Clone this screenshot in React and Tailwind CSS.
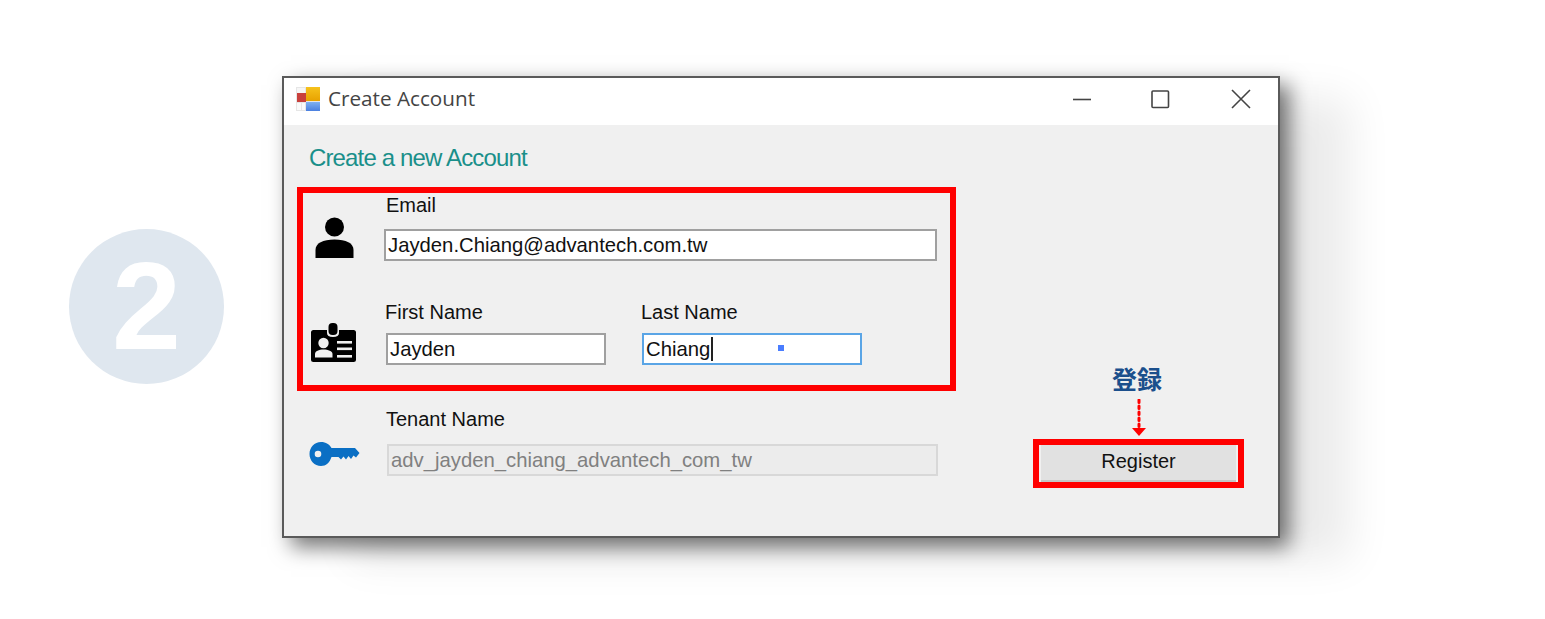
import React from 'react';

const WindowLogo = () => (
  <svg width="24" height="24" viewBox="0 0 24 24" className="shrink-0">
    <defs>
      <linearGradient id="logoYellow" x1="0" y1="0" x2="0" y2="1">
        <stop offset="0" stopColor="#f6c21c" />
        <stop offset="1" stopColor="#e8a200" />
      </linearGradient>
      <linearGradient id="logoBlue" x1="0" y1="0" x2="0" y2="1">
        <stop offset="0" stopColor="#7fb0f0" />
        <stop offset="1" stopColor="#4b80e0" />
      </linearGradient>
    </defs>
    <rect x="0" y="0" width="24" height="24" fill="#e6e6e6" />
    <rect x="1" y="1" width="8" height="5" fill="#f6f6f6" />
    <rect x="1" y="6" width="9" height="9" fill="#c9403c" />
    <rect x="10" y="0" width="14" height="14" fill="url(#logoYellow)" />
    <rect x="10" y="15" width="14" height="9" fill="url(#logoBlue)" />
    <rect x="1" y="16" width="4" height="7" fill="#fafafa" />
    <rect x="6" y="16" width="3" height="7" fill="#fafafa" />
  </svg>
);

const UserIcon = ({ className }) => (
  <svg width="39" height="41" viewBox="0 0 39 41" className={className}>
    <circle cx="19.5" cy="10" r="9.5" fill="#000" />
    <path d="M0.5 41 V33 C0.5 26 8 22.5 19.5 22.5 C31 22.5 38.5 26 38.5 33 V41 Z" fill="#000" />
  </svg>
);

const BadgeIcon = ({ className }) => (
  <svg width="46" height="39" viewBox="0 0 46 39" className={className}>
    <rect x="18.5" y="0" width="9" height="12" rx="4" fill="#000" />
    <path d="M1 9.5 A2.5 2.5 0 0 1 3.5 7 H17 V10 C17 12.5 19 14 23 14 C27 14 29 12.5 29 10 V7 H43.5 A2.5 2.5 0 0 1 46 9.5 V36.5 A2.5 2.5 0 0 1 43.5 39 H3.5 A2.5 2.5 0 0 1 1 36.5 Z" fill="#000" />
    <circle cx="13.5" cy="20" r="5.2" fill="#f0f0f0" />
    <path d="M5 34.5 V31 C5 28 9 26.5 13.5 26.5 C18 26.5 22.5 28 22.5 31 V34.5 Z" fill="#f0f0f0" />
    <rect x="27" y="18" width="15" height="2.6" fill="#f0f0f0" />
    <rect x="27" y="24.5" width="15" height="2.6" fill="#f0f0f0" />
    <rect x="27" y="32" width="15" height="2.6" fill="#f0f0f0" />
  </svg>
);

const KeyIcon = ({ className }) => (
  <svg width="51" height="26" viewBox="0 0 51 26" className={className}>
    <path
      fillRule="evenodd"
      d="M12 1 C17 1 20.5 3.5 22.5 7 H46 L50.5 12 L47 16.5 L44.5 14.5 L42 18 L39.5 15 L37 18.5 L34.5 15.5 L32 18.5 L29.5 16 H22.5 C20.5 22 17 25 12 25 C5.5 25 0.5 19.5 0.5 13 C0.5 6.5 5.5 1 12 1 Z M9 9.7 A3.3 3.3 0 1 0 9 16.3 A3.3 3.3 0 1 0 9 9.7 Z"
      fill="#0a6fc4"
    />
  </svg>
);

const Label = ({ className = '', children }) => (
  <div className={`h-5 text-[20px] leading-5 text-[#111] ${className}`}>{children}</div>
);

const Field = ({ className = '', children }) => (
  <div className={`flex h-8 items-center overflow-hidden border-2 pl-[2px] text-[20.3px] ${className}`}>
    {children}
  </div>
);

export default function App() {
  return (
    <div className="flex h-[619px] w-full items-start overflow-hidden bg-white pl-[69px] font-['Liberation_Sans','Noto_Sans_CJK_JP',sans-serif]">
      {/* step number */}
      <div className="mt-[229px] flex h-[155px] w-[155px] shrink-0 items-center justify-center rounded-full bg-[#dfe7ef] pb-[2px] text-[124px] leading-none font-bold text-white">
        2
      </div>

      {/* dialog */}
      <div className="mt-[76px] ml-[58px] flex h-[462px] w-[998px] shrink-0 flex-col border-2 border-[#5a5a5a] bg-[#f0f0f0] shadow-[9px_9px_20px_rgba(0,0,0,0.55),70px_22px_40px_rgba(0,0,0,0.08)]">
        <div className="flex h-[47px] shrink-0 items-center bg-white pb-[6px] pl-[12px]">
          <WindowLogo />
          <span className="ml-[8px] text-[20.7px] text-[#444] font-['Open_Sans',sans-serif]">Create Account</span>
          <div className="ml-auto flex items-center pr-[27px]">
            <svg width="20" height="20" viewBox="0 0 20 20" className="mr-[58px]">
              <path d="M1 10.5 H19" stroke="#444" strokeWidth="1.6" />
            </svg>
            <svg width="20" height="20" viewBox="0 0 20 20" className="mr-[61px]">
              <rect x="2" y="2" width="16.5" height="16.5" rx="1" fill="none" stroke="#444" strokeWidth="1.6" />
            </svg>
            <svg width="20" height="20" viewBox="0 0 20 20">
              <path d="M1 1 L19 19 M19 1 L1 19" stroke="#444" strokeWidth="1.6" />
            </svg>
          </div>
        </div>

        <div className="flex flex-1 pl-[13px]">
          <div className="w-[659px] shrink-0">
            <h1 className="mt-[19px] mb-[15px] ml-[12px] h-7 text-[24px] leading-7 font-normal tracking-[-0.85px] text-[#1a8f8a]">
              Create a new Account
            </h1>

            {/* required fields */}
            <div className="h-[204px] border-[6px] border-[#ff0000] pt-[2px]">
              <div className="flex">
                <UserIcon className="mt-[22px] ml-[12px] shrink-0" />
                <div className="ml-[30px] flex-1">
                  <Label className="ml-[2px]">Email</Label>
                  <Field className="mt-[14px] w-[553px] border-[#a0a0a0] bg-white text-[#111]">
                    Jayden.Chiang@advantech.com.tw
                  </Field>
                </div>
              </div>
              <div className="mt-[41px] flex">
                <BadgeIcon className="mt-[21px] ml-[7px] shrink-0" />
                <div className="ml-[29px] w-[256px]">
                  <Label>First Name</Label>
                  <Field className="mt-[11px] ml-[1px] w-[220px] border-[#a0a0a0] bg-white text-[#111]">Jayden</Field>
                </div>
                <div>
                  <Label>Last Name</Label>
                  <Field className="relative mt-[11px] ml-[1px] w-[220px] border-[#5aa5e6] bg-white text-[#111]">
                    Chiang
                    <span className="ml-[1px] h-[24px] w-[2px] bg-[#222]" />
                    <span className="absolute top-[10px] left-[134px] h-[6px] w-[6px] bg-[#4a7dff]" />
                  </Field>
                </div>
              </div>
            </div>

            <div className="mt-[18px] flex">
              <KeyIcon className="mt-[32px] ml-[12px] shrink-0" />
              <div className="ml-[26px]">
                <Label>Tenant Name</Label>
                <Field className="mt-[15px] ml-[1px] w-[551px] border-[#d8d8d8] bg-[#ececec] text-[#808080]">
                  adv_jayden_chiang_advantech_com_tw
                </Field>
              </div>
            </div>
          </div>

          {/* register */}
          <div className="ml-[77px] flex w-[211px] shrink-0 flex-col items-center pt-[239px]">
            <div className="mr-[3px] h-8 text-[25px] leading-8 font-bold text-[#1b4f8c]">登録</div>
            <svg width="16" height="38" viewBox="0 0 16 38" className="mt-[3px] mr-[-1px]">
              <path d="M8 1 V28" stroke="#ff0000" strokeWidth="3" strokeDasharray="2.5 3.5" strokeLinecap="round" />
              <path d="M1 29 H15 L8 37 Z" fill="#ff0000" />
            </svg>
            <div className="mt-[2px] h-[49px] w-[211px] border-[6px] border-[#ff0000]">
              <button className="ml-[2px] block h-[37px] w-[195px] border-b-2 border-[#c6c6c6] bg-[#e1e1e1] pb-[4px] text-[20px] leading-none text-[#111]">
                Register
              </button>
            </div>
          </div>
        </div>
      </div>
    </div>
  );
}
